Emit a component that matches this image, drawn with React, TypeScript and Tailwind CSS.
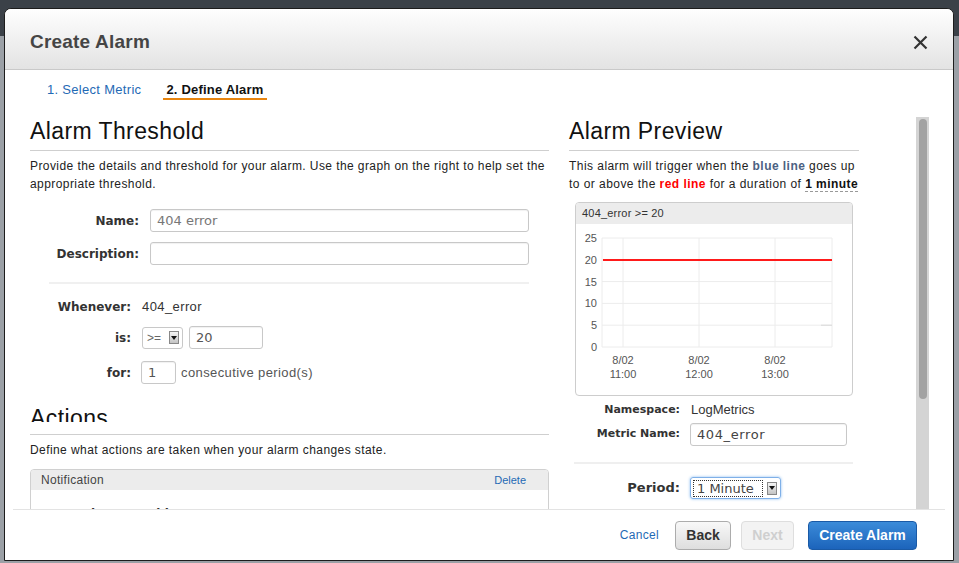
import React from 'react';

const lbl = "font-['DejaVu_Sans'] font-bold text-[#333] text-right shrink-0";
const field =
  "h-[23px] border border-[#c8c8c8] rounded-[3px] bg-white px-[6px] flex items-center font-['DejaVu_Sans'] text-[13px] shadow-[inset_0_1px_1px_rgba(0,0,0,0.06)]";

function DropArrow() {
  return (
    <span className="w-[10px] h-[13px] shrink-0 border border-[#888] bg-[linear-gradient(to_bottom,#f4f4f4,#c4c4c4)] flex items-center justify-center">
      <svg width="6" height="4" viewBox="0 0 6 4">
        <path d="M0 0 L6 0 L3 4 Z" fill="#111" />
      </svg>
    </span>
  );
}

function ChartPreview() {
  const ys = [14, 35.8, 57.6, 79.4, 101.2, 123];
  const ticks = ['25', '20', '15', '10', '5', '0'];
  const xs = [47, 123, 199];
  const times = ['11:00', '12:00', '13:00'];
  return (
    <svg width="276" height="171" className="block">
      {ys.map((y) => (
        <line key={y} x1="26" x2="256" y1={y} y2={y} stroke="#ececec" strokeWidth="1" />
      ))}
      {xs.map((x) => (
        <line key={x} x1={x} x2={x} y1="14" y2="123" stroke="#ececec" strokeWidth="1" />
      ))}
      <line x1="26" x2="26" y1="14" y2="123" stroke="#ececec" />
      <line x1="256" x2="256" y1="14" y2="123" stroke="#ececec" />
      <line x1="245" x2="256" y1="101.2" y2="101.2" stroke="#d8d8d8" />
      <line x1="27" x2="256" y1="36" y2="36" stroke="#ff1a1a" strokeWidth="2" />
      {ticks.map((t, i) => (
        <text key={t} x="21" y={ys[i] + 4} textAnchor="end" fontSize="11" fill="#555" fontFamily="Liberation Sans, sans-serif">
          {t}
        </text>
      ))}
      {xs.map((x, i) => (
        <g key={x} fontSize="11" fill="#555" fontFamily="Liberation Sans, sans-serif" textAnchor="middle">
          <text x={x} y="140">8/02</text>
          <text x={x} y="154">{times[i]}</text>
        </g>
      ))}
    </svg>
  );
}

export default function App() {
  return (
    <div className="w-[959px] h-[563px] overflow-hidden bg-[linear-gradient(to_bottom,#3b4148_0px,#3b4148_36px,#9ba0a6_36px)] font-['Liberation_Sans',Arial,sans-serif] pt-[8px] pl-[4px]">
      <div className="w-[950px] h-[553px] bg-white border border-[#1c1c1c] rounded-t-[7px] flex flex-col overflow-hidden">
        {/* header */}
        <div className="h-[61px] shrink-0 flex items-center justify-between pl-[25px] pr-[25px] pt-[6px] bg-[linear-gradient(to_bottom,#fefefe,#e3e3e3)] border-b border-[#c9c9c9]">
          <h1 className="text-[19px] font-bold text-[#454545] tracking-[0.2px]">Create Alarm</h1>
          <svg width="15" height="15" viewBox="0 0 15 15">
            <path d="M1.5 1.5 L13.5 13.5 M13.5 1.5 L1.5 13.5" stroke="#333" strokeWidth="2.2" />
          </svg>
        </div>

        {/* wizard steps */}
        <div className="h-[35px] shrink-0 flex items-start pl-[42px] pt-[12px] text-[13px] leading-[15px]">
          <span className="text-[#1f6ab5] tracking-[0.3px]">1. Select Metric</span>
          <span className="ml-[22px] px-[3px] pb-[1px] font-bold text-[#111] tracking-[0.2px] border-b-2 border-[#e8850f]">2. Define Alarm</span>
        </div>

        {/* body */}
        <div className="h-[404px] shrink-0 flex overflow-hidden">
          {/* left column */}
          <div className="ml-[25px] w-[519px] shrink-0 pt-[13px]">
            <h2 className="text-[23px] leading-[26px] text-[#111] tracking-[0.4px] pb-[6px] border-b border-[#cfcfcf]">Alarm Threshold</h2>
            <p className="mt-[6px] text-[12px] leading-[18px] text-[#222] tracking-[0.42px]">
              Provide the details and threshold for your alarm. Use the graph on the right to help set the appropriate threshold.
            </p>
            <div className="mt-[16px] flex items-center">
              <span className={`${lbl} w-[109px] text-[12px]`}>Name:</span>
              <div className={`${field} ml-[11px] w-[379px] text-[#777]`}>404 error</div>
            </div>
            <div className="mt-[10px] flex items-center">
              <span className={`${lbl} w-[109px] text-[12px]`}>Description:</span>
              <div className={`${field} ml-[11px] w-[379px]`} />
            </div>
            <div className="mt-[17px] ml-[19px] w-[480px] h-[2px] bg-[#f0f0f0]" />

            <div className="mt-[13px] flex items-center h-[20px]">
              <span className={`${lbl} w-[101px] text-[12px]`}>Whenever:</span>
              <span className="ml-[11px] text-[13px] text-[#333] tracking-[0.4px]">404_error</span>
            </div>
            <div className="mt-[9px] flex items-center">
              <span className={`${lbl} w-[101px] text-[12px]`}>is:</span>
              <div className="ml-[11px] w-[41px] h-[22px] border border-[#c8c8c8] rounded-[3px] flex items-center justify-between pl-[4px] pr-[3px]">
                <span className="text-[12px] text-[#666]">&gt;=</span>
                <DropArrow />
              </div>
              <div className={`${field} ml-[6px] w-[74px] h-[22px] text-[#555]`}>20</div>
            </div>
            <div className="mt-[12px] flex items-center">
              <span className={`${lbl} w-[101px] text-[12px]`}>for:</span>
              <div className={`${field} ml-[10px] w-[35px] h-[22px] text-[#555]`}>1</div>
              <span className="ml-[5px] text-[13px] text-[#555] tracking-[0.4px]">consecutive period(s)</span>
            </div>

            <div className="mt-[21px] h-[17px] overflow-hidden">
              <h2 className="text-[23px] leading-[26px] text-[#111] tracking-[0.4px]">Actions</h2>
            </div>
            <div className="mt-[12px] border-b border-[#cfcfcf]" />
            <p className="mt-[6px] text-[12px] leading-[18px] text-[#222] tracking-[0.42px]">Define what actions are taken when your alarm changes state.</p>
            <div className="mt-[10px] w-[519px] border border-[#d0d0d0] rounded-[4px] overflow-hidden">
              <div className="h-[20px] bg-[#ececec] flex items-center justify-between pl-[10px] pr-[22px]">
                <span className="text-[12px] text-[#444] tracking-[0.3px]">Notification</span>
                <span className="text-[11px] text-[#1f6ab5]">Delete</span>
              </div>
              <div className="pt-[15px] pb-[10px] flex items-center">
                <span className={`${lbl} w-[145px] text-[12px]`}>Whenever this alarm:</span>
                <div className={`${field} ml-[38px] w-[199px]`}>State is ALARM</div>
              </div>
            </div>
          </div>

          {/* right column */}
          <div className="ml-[20px] w-[290px] shrink-0 pt-[13px]">
            <h2 className="text-[23px] leading-[26px] text-[#111] tracking-[0.4px] pb-[6px] border-b border-[#cfcfcf]">Alarm Preview</h2>
            <div className="mt-[6px] text-[12px] leading-[18px] text-[#222] tracking-[0.45px] whitespace-nowrap">
              <div>
                This alarm will trigger when the <b className="text-[#4b6182]">blue line</b> goes up
              </div>
              <div>
                to or above the <b className="text-[#ff0000]">red line</b> for a duration of{' '}
                <b className="text-[#111] border-b border-dashed border-[#999]">1 minute</b>
              </div>
            </div>
            <div className="mt-[9px] ml-[6px] w-[278px] h-[194px] border border-[#cdcdcd] rounded-[4px] overflow-hidden">
              <div className="h-[21px] bg-[#ececec] flex items-center pl-[6px] text-[11px] text-[#333] tracking-[0.2px]">404_error &gt;= 20</div>
              <ChartPreview />
            </div>
            <div className="mt-[4px] flex items-center h-[20px]">
              <span className={`${lbl} w-[111px] text-[11px]`}>Namespace:</span>
              <span className="ml-[11px] text-[13px] text-[#333]">LogMetrics</span>
            </div>
            <div className="mt-[3px] flex items-center">
              <span className={`${lbl} w-[111px] text-[11px]`}>Metric Name:</span>
              <div className={`${field} ml-[10px] w-[157px] text-[#444] tracking-[0.6px]`}>404_error</div>
            </div>
            <div className="mt-[16px] ml-[5px] w-[279px] h-[2px] bg-[#efefef]" />
            <div className="mt-[13px] flex items-center">
              <span className={`${lbl} w-[111px] text-[13px]`}>Period:</span>
              <div className="ml-[10px] w-[91px] h-[22px] border border-[#7fb0e8] rounded-[3px] shadow-[0_0_3px_#8bbcf0] flex items-center justify-between pl-[2px] pr-[3px]">
                <span className="h-[17px] w-[70px] flex items-end pb-[1px] px-[3px] border border-dotted border-[#333] text-[13px] text-[#444] font-['DejaVu_Sans'] leading-none">1 Minute</span>
                <DropArrow />
              </div>
            </div>
          </div>

          {/* scrollbar */}
          <div className="ml-[57px] mt-[12px] w-[13px] h-[392px] bg-[#d4d4d4] shrink-0 flex justify-center pt-[2px]">
            <div className="w-[8px] h-[280px] rounded-full bg-[#a2a2a2]" />
          </div>
        </div>

        {/* footer */}
        <div className="mx-[8px] border-t border-[#e3e3e3] flex-1 flex items-start justify-end pt-[11px] pr-[28px]">
          <span className="text-[12px] leading-[29px] text-[#1f6ab5] tracking-[0.3px] mr-[16px]">Cancel</span>
          <button className="w-[56px] h-[29px] rounded-[4px] border border-[#acacac] bg-[linear-gradient(to_bottom,#f8f8f8,#dedede)] text-[14px] font-bold text-[#333] mr-[10px]">Back</button>
          <button className="w-[53px] h-[29px] rounded-[4px] border border-[#dedede] bg-[#f3f3f3] text-[14px] font-bold text-[#cfcfcf] mr-[14px]">Next</button>
          <button className="w-[109px] h-[29px] rounded-[4px] border border-[#1a5aa6] bg-[linear-gradient(to_bottom,#3b8bd9,#1c64bb)] text-[14px] font-bold text-white">Create Alarm</button>
        </div>
      </div>
    </div>
  );
}
